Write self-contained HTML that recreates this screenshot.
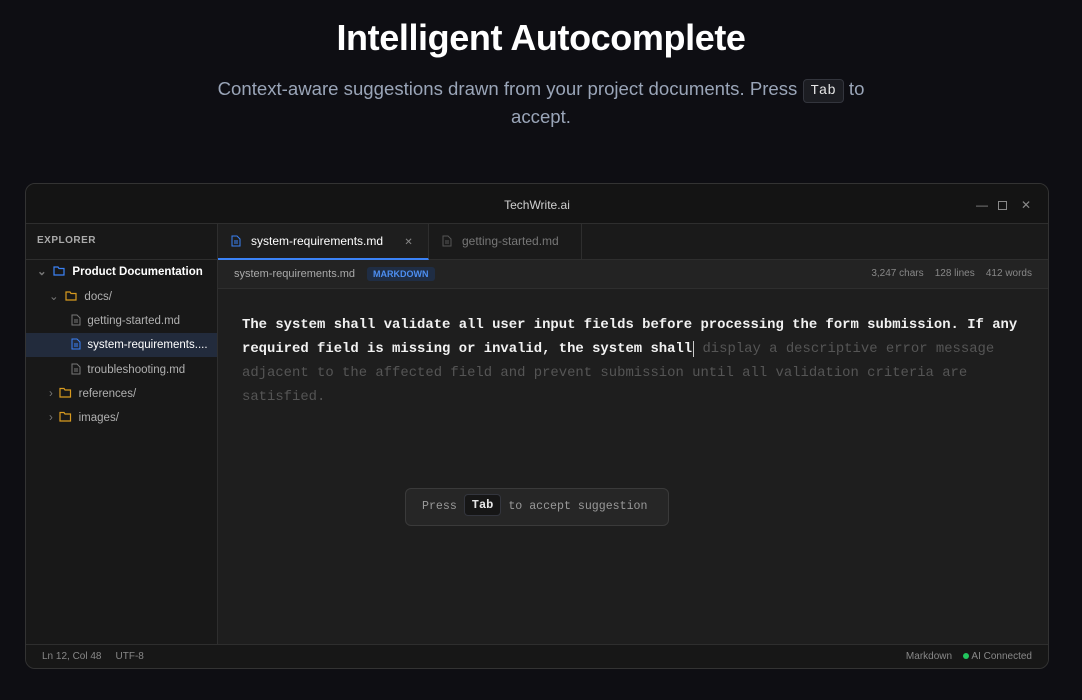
<!DOCTYPE html>
<html><head><style>
*{margin:0;padding:0;box-sizing:border-box}
body{width:1082px;height:700px;background:#0e0e13;font-family:"Liberation Sans",sans-serif;position:relative;overflow:hidden}
.h1{position:absolute;top:17px;left:0;width:1082px;text-align:center;color:#fff;font-size:36px;font-weight:bold;letter-spacing:-0.4px}
.sub{position:absolute;top:75px;left:141px;width:800px;text-align:center;color:#9aa5b8;font-size:18.6px;line-height:28px}
.kbd{display:inline-block;background:#1c1d22;border:1px solid #33353d;border-radius:4px;font-family:"Liberation Mono",monospace;font-size:14px;color:#e6e6e6;padding:0 7px;line-height:22px;vertical-align:1px}
.win{position:absolute;left:25px;top:183px;width:1024px;height:486px;border:1px solid #333;border-radius:10px;overflow:hidden;background:#1e1e1e}
.title{position:absolute;left:0;top:0;width:100%;height:40px;background:#141414;border-bottom:1px solid #2e2e2e;color:#d0d0d0;font-size:12px;text-align:center;line-height:42px}
.ctl{position:absolute;top:0;color:#888;font-size:12px}
.side{position:absolute;left:0;top:40px;width:192px;height:420px;background:#181818;border-right:1px solid #2e2e2e}
.exp{height:36px;border-bottom:1px solid #2e2e2e;color:#aaa;font-size:10px;font-weight:bold;letter-spacing:.5px;line-height:34px;padding-left:11px}
.it{position:absolute;height:24px;line-height:24px;font-size:11.5px;color:#b0b0b0;white-space:nowrap}
.tabs{position:absolute;left:192px;top:40px;right:0;height:36px;background:#1a1a1a;border-bottom:1px solid #2e2e2e}
.tab{position:absolute;top:0;height:36px;line-height:35px;font-size:12px;border-right:1px solid #2e2e2e}
.info{position:absolute;left:192px;top:76px;right:0;height:29px;background:#232323;border-bottom:1px solid #2e2e2e;font-size:11px;color:#aaa;line-height:28px}
.ed{position:absolute;left:216px;top:129px;width:800px;font-family:"Liberation Mono",monospace;font-size:13.9px;line-height:24px}
.b{color:#f2f2f2;font-weight:bold}.g{color:#555}
.tip{position:absolute;left:379px;top:304px;width:264px;height:38px;background:#262626;border:1px solid #3a3a3a;border-radius:6px;font-family:"Liberation Mono",monospace;font-size:11.6px;color:#999;line-height:36px;padding-left:16px}
.tip .kbd{font-size:12px;font-weight:bold;line-height:20px;padding:0 7px;background:#161616}
.status{position:absolute;left:0;top:460px;width:100%;height:26px;background:#171717;border-top:1px solid #2e2e2e;font-size:10px;color:#888;line-height:24px}
</style></head><body>
<div class="h1">Intelligent Autocomplete</div>
<div class="sub">Context-aware suggestions drawn from your project documents. Press <span class="kbd">Tab</span> to<br>accept.</div>
<div class="win">
<div class="title">TechWrite.ai
<span class="ctl" style="left:950px">—</span>
<span class="ctl" style="left:972px"><span style="display:inline-block;width:9px;height:9px;border:1px solid #888;vertical-align:-1px"></span></span>
<span class="ctl" style="left:995px">✕</span></div>
<div class="side">
<div class="exp">EXPLORER</div>
<div class="it" style="left:11px;top:36px;color:#fff;font-weight:bold"><span style="color:#777">⌄</span>&nbsp;&nbsp;<svg width="13" height="11" viewBox="0 0 13 11" style="vertical-align:-1px"><path d="M1 2h4l1 1.5h5v6.5H1z" fill="none" stroke="#3b82f6" stroke-width="1.2"/></svg>&nbsp; Product Documentation</div>
<div class="it" style="left:23px;top:61px"><span style="color:#777">⌄</span>&nbsp;&nbsp;<svg width="13" height="11" viewBox="0 0 13 11" style="vertical-align:-1px"><path d="M1 2h4l1 1.5h5v6.5H1z" fill="none" stroke="#d89a1f" stroke-width="1.2"/></svg>&nbsp; docs/</div>
<div class="it" style="left:45px;top:85px"><svg width="10" height="12" viewBox="0 0 10 12" style="vertical-align:-2px"><path d="M1 1h5l3 3v7H1z M3 6h4M3 8h4" fill="none" stroke="#777"/></svg>&nbsp; getting-started.md</div>
<div class="it" style="left:0;top:109px;width:191px;background:#222b3c;color:#fff;padding-left:45px"><svg width="10" height="12" viewBox="0 0 10 12" style="vertical-align:-2px"><path d="M1 1h5l3 3v7H1z M3 6h4M3 8h4" fill="none" stroke="#3b82f6"/></svg>&nbsp; system-requirements....</div>
<div class="it" style="left:45px;top:134px"><svg width="10" height="12" viewBox="0 0 10 12" style="vertical-align:-2px"><path d="M1 1h5l3 3v7H1z M3 6h4M3 8h4" fill="none" stroke="#777"/></svg>&nbsp; troubleshooting.md</div>
<div class="it" style="left:23px;top:158px"><span style="color:#777">›</span>&nbsp;&nbsp;<svg width="13" height="11" viewBox="0 0 13 11" style="vertical-align:-1px"><path d="M1 1.5h4l1 1.5h5.5v7H1z" fill="none" stroke="#d89a1f" stroke-width="1.2"/></svg>&nbsp; references/</div>
<div class="it" style="left:23px;top:182px"><span style="color:#777">›</span>&nbsp;&nbsp;<svg width="13" height="11" viewBox="0 0 13 11" style="vertical-align:-1px"><path d="M1 1.5h4l1 1.5h5.5v7H1z" fill="none" stroke="#d89a1f" stroke-width="1.2"/></svg>&nbsp; images/</div>
</div>
<div class="tabs">
<div class="tab" style="left:0;width:211px;background:#1e1e1e;color:#fff;padding-left:13px;border-bottom:2px solid #3b82f6"><svg width="10" height="12" viewBox="0 0 10 12" style="vertical-align:-2px"><path d="M1 1h5l3 3v7H1z M3 6h4M3 8h4" fill="none" stroke="#3b82f6"/></svg>&nbsp;&nbsp; system-requirements.md <span style="color:#888;margin-left:18px;font-size:10px">✕</span></div>
<div class="tab" style="left:211px;width:153px;color:#777;padding-left:13px"><svg width="10" height="12" viewBox="0 0 10 12" style="vertical-align:-2px"><path d="M1 1h5l3 3v7H1z M3 6h4M3 8h4" fill="none" stroke="#555"/></svg>&nbsp;&nbsp; getting-started.md</div>
</div>
<div class="info"><span style="margin-left:16px">system-requirements.md</span><span style="margin-left:12px;background:#1f2d44;color:#4d8ef0;font-size:9px;font-weight:bold;padding:2px 6px;border-radius:3px">MARKDOWN</span>
<span style="position:absolute;right:16px;top:0;font-size:10px;color:#888">3,247 chars&nbsp;&nbsp;&nbsp;&nbsp;128 lines&nbsp;&nbsp;&nbsp;&nbsp;412 words</span></div>
<div class="ed"><span class="b">The system shall validate all user input fields before processing the form submission. If any required field is missing or invalid, the system shall</span><span style="border-left:1px solid #ccc;margin-left:1px"></span><span class="g"> display a descriptive error message adjacent to the affected field and prevent submission until all validation criteria are satisfied.</span></div>
<div class="tip">Press <span class="kbd">Tab</span> to accept suggestion</div>
<div class="status"><span style="margin-left:16px">Ln 12, Col 48</span><span style="margin-left:14px">UTF-8</span>
<span style="position:absolute;right:16px;top:0">Markdown&nbsp;&nbsp;&nbsp;&nbsp;<span style="display:inline-block;width:6px;height:6px;border-radius:50%;background:#22c55e;vertical-align:0"></span> AI Connected</span></div>
</div>
</body></html>
